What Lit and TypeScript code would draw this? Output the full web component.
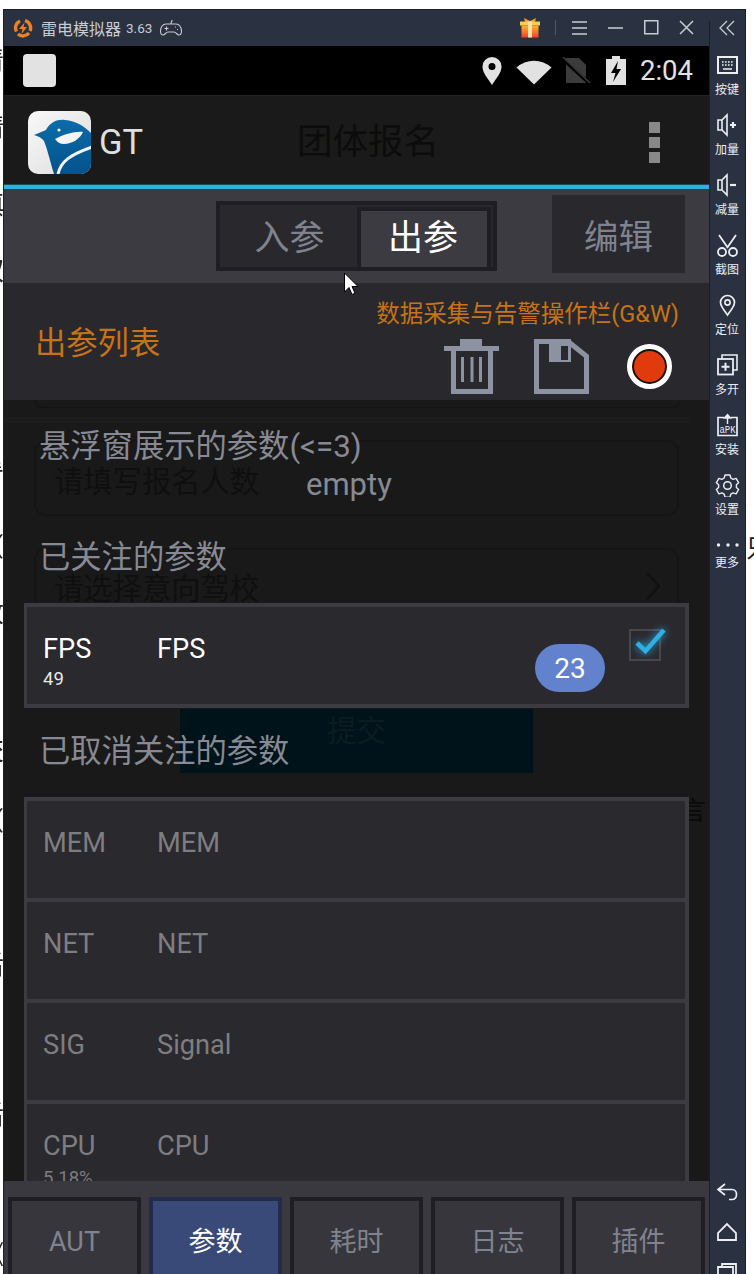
import { LitElement, html, css, svg } from 'lit';
import { customElement } from 'lit/decorators.js';

// fragments of the page behind the emulator window, cut off by the window edges
const LEFT_SCRAPS = [
  { y: 46, ch: '清' }, { y: 113, ch: '情' }, { y: 190, ch: '填' }, { y: 256, ch: '权' },
  { y: 325, ch: '；' }, { y: 460, ch: '看' }, { y: 532, ch: '（' }, { y: 598, ch: '收' },
  { y: 666, ch: '；' }, { y: 736, ch: '交' }, { y: 806, ch: '（' }, { y: 950, ch: '后' },
  { y: 1100, ch: '后' }, { y: 1240, ch: '《' },
];

const ROWS_OFF = [
  { code: 'MEM', name: 'MEM', value: '' },
  { code: 'NET', name: 'NET', value: '' },
  { code: 'SIG', name: 'Signal', value: '' },
  { code: 'CPU', name: 'CPU', value: '5.18%' },
];

const TABS = ['AUT', '参数', '耗时', '日志', '插件'];

const SIDE_ICONS = {
  keys: svg`<rect x="5" y="4" width="19" height="16" fill="none" stroke="currentColor" stroke-width="2"/>
    <path d="M9 9h1.6M12 9h1.6M15 9h1.6M18 9h1.6M9 12h1.6M12 12h1.6M15 12h1.6M18 12h1.6M10 16h9" stroke="currentColor" stroke-width="1.6" fill="none"/>`,
  volUp: svg`<path d="M5 7h4l5-5v20l-5-5H5zM9 7v10" fill="none" stroke="currentColor" stroke-width="1.6"/>
    <path d="M17 12h6M20 9v6" stroke="currentColor" stroke-width="2.2"/>`,
  volDown: svg`<path d="M5 7h4l5-5v20l-5-5H5zM9 7v10" fill="none" stroke="currentColor" stroke-width="1.6"/>
    <path d="M17 12h6" stroke="currentColor" stroke-width="2.2"/>`,
  cut: svg`<path d="M6 2l9 13M23 2l-9 13" fill="none" stroke="currentColor" stroke-width="1.8"/>
    <circle cx="9" cy="19" r="4" fill="none" stroke="currentColor" stroke-width="1.8"/>
    <circle cx="20" cy="19" r="4" fill="none" stroke="currentColor" stroke-width="1.8"/>`,
  pin: svg`<path d="M14.5 22C10 16 7.5 13 7.5 9.5a7 7 0 0 1 14 0c0 3.500-2.500 6.500-7 12.500z" fill="none" stroke="currentColor" stroke-width="1.7"/>
    <circle cx="14.500" cy="9.500" r="2.600" fill="none" stroke="currentColor" stroke-width="1.600"/>`,
  multi: svg`<path d="M9 6V2h15v15h-4" fill="none" stroke="currentColor" stroke-width="1.600"/>
    <rect x="5" y="6" width="15" height="15.500" fill="none" stroke="currentColor" stroke-width="1.800"/>
    <path d="M8.500 13.800h8M12.500 9.800v8" stroke="currentColor" stroke-width="2"/>`,
  apk: svg`<path d="M11 4.500H5v18h19v-18h-6" fill="none" stroke="currentColor" stroke-width="1.700"/>
    <path d="M14.500 11V3M11.500 5l3-3.500 3 3.500z" fill="currentColor" stroke="currentColor" stroke-width="1.400"/>
    <text x="14.500" y="20" text-anchor="middle" font-size="10" textLength="16" lengthAdjust="spacingAndGlyphs" font-family="Liberation Mono, monospace" fill="currentColor">aPK</text>`,
  gear: svg`<path d="M12 2.500h5l.8 3 2.300 1.300 3-.9 2.500 4.300-2.200 2.100v2.600l2.200 2.100-2.500 4.300-3-.9-2.300 1.300-.8 3h-5l-.8-3-2.300-1.300-3 .9-2.500-4.300 2.200-2.100v-2.600l-2.200-2.100 2.500-4.300 3 .9 2.300-1.300z" fill="none" stroke="currentColor" stroke-width="1.400" stroke-linejoin="round" transform="translate(0 -.5)"/>
    <circle cx="14.500" cy="12.500" r="3.800" fill="none" stroke="currentColor" stroke-width="1.500"/>`,
  dots: svg`<circle cx="5.500" cy="12" r="1.700" fill="currentColor"/><circle cx="15" cy="12" r="1.700" fill="currentColor"/><circle cx="24" cy="12" r="1.700" fill="currentColor"/>`,
};

const SIDE_ITEMS: { icon: keyof typeof SIDE_ICONS; label: string }[] = [
  { icon: 'keys', label: '按键' },
  { icon: 'volUp', label: '加量' },
  { icon: 'volDown', label: '减量' },
  { icon: 'cut', label: '截图' },
  { icon: 'pin', label: '定位' },
  { icon: 'multi', label: '多开' },
  { icon: 'apk', label: '安装' },
  { icon: 'gear', label: '设置' },
  { icon: 'dots', label: '更多' },
];

@customElement('app-root')
export class AppRoot extends LitElement {
  static styles = css`
    :host {
      display: block;
      position: relative;
      width: 754px;
      height: 1274px;
      overflow: hidden;
      background: #fff;
      font-family: Roboto, "Noto Sans CJK SC", sans-serif;
    }

    svg {
      display: block;
      flex: none;
    }

    .scraps-left {
      position: absolute;
      left: 0;
      top: 0;
      width: 3px;
      height: 1274px;
      overflow: hidden;
      opacity: 0.99;
    }

    .scrap {
      position: absolute;
      right: -1px;
      font-size: 26px;
      line-height: 30px;
      color: #222;
      white-space: nowrap;
    }

    .scrap-right {
      position: absolute;
      left: 746px;
      top: 534px;
      width: 8px;
      overflow: hidden;
      font-size: 25px;
      line-height: 30px;
      color: #222;
    }

    .window {
      position: absolute;
      left: 3px;
      top: 9px;
      width: 743px;
      height: 1265px;
      box-sizing: border-box;
      display: flex;
      border: 1px solid #1a1f29;
      border-bottom: 0;
      background: #2a3140;
    }

    .screen {
      width: 705px;
      display: flex;
      flex-direction: column;
      flex: none;
      height: 100%;
    }

    .titlebar {
      height: 35px;
      flex: none;
      display: flex;
      align-items: center;
      color: #c8ccd4;
      padding-left: 9px;
    }

    .app-name {
      font-size: 16px;
      margin-left: 8px;
    }

    .app-ver {
      font-size: 13.500px;
      margin-left: 5px;
    }

    .pad-icon {
      margin-left: 8px;
    }

    .win-actions {
      margin-left: auto;
      display: flex;
      align-items: center;
      padding-right: 15px;
    }

    .statusbar {
      height: 50px;
      flex: none;
      box-sizing: border-box;
      margin-top: 1px;
      background: #000;
      border-bottom: 1px solid #222;
      display: flex;
      align-items: center;
      color: #e2e2e2;
      padding-left: 19px;
    }

    .notif {
      width: 33px;
      height: 33px;
      border-radius: 4px;
      background: #e2e2e2;
    }

    .status-icons {
      margin-left: auto;
      display: flex;
      align-items: center;
      padding-right: 16px;
    }

    .clock {
      font-size: 27.500px;
      margin-left: 14px;
    }

    .appbar {
      height: 89px;
      flex: none;
      background: #1a1a1a;
      display: flex;
      align-items: center;
    }

    .logo {
      margin: 4px 0 0 24px;
    }

    .gt {
      font-size: 34.500px;
      color: #dfdfdf;
      margin-left: 8px;
      margin-top: 2px;
    }

    .ghost-title {
      font-size: 35.500px;
      color: #0c0c0c;
      margin-left: 154px;
      margin-top: -4px;
    }

    .overflow {
      margin-left: auto;
      margin-right: 49px;
      display: flex;
      flex-direction: column;
      gap: 4px;
      margin-top: 3px;
    }

    .overflow i {
      display: block;
      width: 11px;
      height: 11px;
      background: #888;
    }

    .accent {
      height: 4px;
      flex: none;
      background: #2db0e4;
      box-shadow: 0 -1px 0 #1c4a60;
    }

    .modebar {
      height: 94px;
      flex: none;
      background: #3c3b42;
      display: flex;
      align-items: flex-start;
    }

    .segment {
      margin: 12px 0 0 212px;
      width: 281px;
      height: 70px;
      box-sizing: border-box;
      border: 4px solid #1e1e24;
      background: #28282d;
      padding: 2px 3px 2px 0;
      display: grid;
      grid-template-columns: 137px 134px;
      color: #80838f;
      font-size: 35px;
      line-height: 64px;
      text-align: center;
    }

    .segment .first {
      padding-left: 2px;
    }

    .segment .on {
      box-sizing: border-box;
      border: 4px solid #1e1e24;
      background: #3c3b42;
      color: #fff;
      line-height: 56px;
      padding-right: 2px;
    }

    .edit {
      margin: 6px 0 0 55px;
      width: 133px;
      height: 78px;
      background: #28282d;
      color: #80838f;
      font-size: 34.500px;
      line-height: 84px;
      text-align: center;
    }

    .toolbar {
      height: 117px;
      flex: none;
      background: #29282d;
      display: flex;
      justify-content: space-between;
      color: #c77316;
    }

    .toolbar-title {
      font-size: 31.300px;
      line-height: 44px;
      margin: 39px 0 0 31px;
    }

    .tools {
      display: flex;
      flex-direction: column;
      align-items: flex-end;
      padding-right: 30px;
    }

    .tools-label {
      font-size: 23.500px;
      line-height: 30px;
      margin-top: 16px;
    }

    .tool-icons {
      display: flex;
      align-items: center;
      gap: 35px;
      margin: 10px 7px 0 0;
      color: #8d92a3;
    }

    .record {
      width: 45px;
      height: 45px;
      box-sizing: border-box;
      border-radius: 50%;
      border: 5px solid #fff;
      background: #e03a0d;
      box-shadow: inset 0 0 0 2px #111;
      margin-left: 3px;
    }

    .body {
      flex: 1;
      min-height: 0;
      position: relative;
      overflow: hidden;
      background: #191919;
    }

    /* the dimmed form of the app underneath the panel */
    .ghost {
      position: absolute;
      inset: 0;
      display: flex;
      flex-direction: column;
      color: #0f0f0f;
    }

    .ghost-tail {
      margin-left: 31px;
      width: 645px;
      height: 8px;
      box-sizing: border-box;
      border: 1px solid #131313;
      border-top: 0;
      border-radius: 0 0 10px 10px;
    }

    .ghost-band {
      margin-top: 9px;
      width: 685px;
      height: 6px;
      background: #1c1c1c;
    }

    .ghost-card {
      margin-left: 30px;
      width: 645px;
      box-sizing: border-box;
      border: 2px solid #151515;
      border-radius: 12px;
      display: flex;
      align-items: center;
      justify-content: space-between;
      padding: 0 17px 0 18px;
      font-size: 29.300px;
      flex: none;
    }

    .ghost-card.one {
      margin-top: 17px;
      height: 76px;
      padding-top: 2px;
    }

    .ghost-card.two {
      margin-top: 32px;
      height: 80px;
      padding-bottom: 4px;
    }

    .ghost-submit {
      margin: 81px 0 0 176px;
      width: 353px;
      height: 64px;
      background: #00131a;
      color: #0d1c20;
      font-size: 29.300px;
      line-height: 44px;
      text-align: center;
      flex: none;
    }

    .ghost-word {
      margin: 23px 0 0 676px;
      font-size: 26px;
      line-height: 30px;
      color: #0a0a0a;
    }

    .panel {
      position: relative;
      display: flex;
      flex-direction: column;
      color: #878a94;
    }

    .heading {
      font-size: 31.300px;
      line-height: 44px;
      margin-left: 35px;
    }

    .heading.first {
      margin-top: 25px;
    }

    .empty {
      font-size: 31px;
      line-height: 40px;
      margin: -4px 0 0 302px;
    }

    .heading.followed {
      margin-top: 31px;
    }

    .heading.unfollowed {
      margin-top: 22px;
    }

    .group {
      margin-left: 20px;
      width: 665px;
      box-sizing: border-box;
      border: solid #3c3b42;
      border-width: 4px 4px 4px 3px;
      background: #2a292e;
    }

    .group.on {
      margin-top: 23px;
    }

    .group.off {
      margin-top: 23px;
    }

    .row {
      height: 97px;
      box-sizing: border-box;
      display: flex;
      align-items: flex-start;
      padding: 27px 0 0 16px;
      font-size: 27.200px;
      line-height: 30px;
      color: #7e7e80;
      overflow: hidden;
    }

    .group.off .row + .row {
      height: 101px;
      border-top: 4px solid #3c3b42;
    }

    .group.off .value {
      margin-top: 5px;
    }

    .group.on .row {
      color: #fff;
      overflow: visible;
    }

    .cell-code {
      width: 114px;
      flex: none;
    }

    .value {
      font-size: 18.500px;
      line-height: 24px;
      margin-top: 3px;
    }

    .group.on .value {
      color: #e8e8e8;
    }

    .badge {
      margin: 10px 0 0 auto;
      width: 70px;
      height: 48px;
      border-radius: 24px;
      background: #6282cd;
      color: #fff;
      font-size: 28px;
      line-height: 50px;
      text-align: center;
    }

    .check {
      margin: -9px 20px 0 24px;
      overflow: visible;
    }

    .tabs {
      height: 93px;
      flex: none;
      box-sizing: border-box;
      background: #3a393f;
      padding: 16px 4px 0 4px;
      overflow: hidden;
      display: grid;
      grid-template-columns: repeat(5, 133px);
      gap: 8px;
    }

    .tab {
      height: 100px;
      box-sizing: border-box;
      border: 4px solid #1e1e24;
      background: #37363c;
      color: #80838f;
      font-size: 27px;
      line-height: 82px;
      text-align: center;
    }

    .tab.on {
      border-color: #232b4b;
      background: #3a4a78;
      color: #fff;
    }

    .side {
      position: relative;
      flex: 1;
      display: flex;
      flex-direction: column;
      color: #eceef2;
      overflow: hidden;
    }

    .side::before {
      content: '';
      position: absolute;
      left: 0;
      top: 11px;
      bottom: 0;
      width: 1px;
      background: #191e28;
    }

    .collapse {
      height: 36px;
      flex: none;
      display: flex;
      align-items: center;
      justify-content: center;
      color: #c8ccd4;
    }

    .side-items {
      padding-top: 7px;
      display: flex;
      flex-direction: column;
    }

    .side-item {
      height: 60px;
      display: flex;
      flex-direction: column;
      align-items: center;
    }

    .side-item span {
      margin-top: 5px;
      font-size: 12px;
      line-height: 16px;
    }

    .side-item.more span {
      margin-top: -2px;
    }

    .side-nav {
      margin-top: auto;
      margin-bottom: -8px;
      display: flex;
      flex-direction: column;
      align-items: center;
      gap: 20px;
    }

    .cursor {
      position: absolute;
      left: 343px;
      top: 272px;
    }
  `;

  private renderTitleIcons() {
    return html`<div class="win-actions">
      <svg width="20" height="20" viewBox="0 0 20 20" style="margin-right:15px">
        <defs><linearGradient id="gift" x1="0" y1="0" x2="0" y2="1"><stop offset="0" stop-color="#ffb52e"/><stop offset="1" stop-color="#f0402a"/></linearGradient></defs>
        <path d="M4 0l6 3 6-3-1 4H5z" fill="#f39a2b"/>
        <rect x="0" y="3.500" width="20" height="4" fill="#f7cf4d"/>
        <rect x="1.500" y="7.500" width="17" height="12" fill="url(#gift)"/>
        <rect x="8" y="3.500" width="4" height="16" fill="#ffe0a8"/>
      </svg>
      <svg width="2" height="15"><rect width="1" height="15" fill="#4a5870"/></svg>
      <svg width="15" height="14" viewBox="0 0 15 14" style="margin-left:15px" stroke="#c8ccd4" stroke-width="1.500"><path d="M0 1h15M0 7h15M0 13h15"/></svg>
      <svg width="15" height="14" viewBox="0 0 15 14" style="margin-left:21px" stroke="#c8ccd4" stroke-width="1.500"><path d="M0 7h15"/></svg>
      <svg width="15" height="15" viewBox="0 0 15 15" style="margin-left:21px" fill="none" stroke="#c8ccd4" stroke-width="1.500"><rect x=".750" y=".750" width="13" height="13"/></svg>
      <svg width="15" height="15" viewBox="0 0 15 15" style="margin-left:20px" fill="none" stroke="#c8ccd4" stroke-width="1.500"><path d="M1 1l13 13M14 1L1 14"/></svg>
    </div>`;
  }

  private renderStatusIcons() {
    return html`<div class="status-icons">
      <svg width="20" height="28" viewBox="0 0 20 28" fill="#e2e2e2"><path fill-rule="evenodd" d="M10 28C4 19 .500 15 .500 9.500a9.500 9.500 0 0 1 19 0C19.500 15 16 19 10 28zM10 6a3.500 3.500 0 1 0 0 7 3.500 3.500 0 0 0 0-7z"/></svg>
      <svg width="36" height="28" viewBox="0 0 36 28" fill="#e2e2e2" style="margin-left:14px"><path d="M.500 10.500A26 26 0 0 1 35.500 10.500L18 27.500z"/></svg>
      <svg width="28" height="28" viewBox="0 0 28 28" style="margin-left:11px"><path d="M3 1h13l7 7v18H3z" fill="#3b3b3b"/><path d="M0 2l27 25" stroke="#000" stroke-width="3.500"/><path d="M0 0l27 26" stroke="#3b3b3b" stroke-width="1.500"/></svg>
      <svg width="20" height="29" viewBox="0 0 20 29" style="margin-left:15px"><path d="M6 0h8v3h6v26H0V3h6z" fill="#e2e2e2"/><path d="M12 5L5 17h4.500L7 26l8-13h-4.500z" fill="#000"/></svg>
      <span class="clock">2:04</span>
    </div>`;
  }

  render() {
    return html`
      <div class="scraps-left">
        ${LEFT_SCRAPS.map((s) => html`<div class="scrap" style="top:${s.y}px">${s.ch}</div>`)}
      </div>
      <div class="scrap-right">只</div>

      <div class="window">
        <div class="screen">
          <div class="titlebar">
            <svg width="20" height="20" viewBox="0 0 20 20" fill="none">
              <path d="M3.500 13.500A7.500 7.500 0 0 1 7 3M12 2.700A7.500 7.500 0 0 1 17 13M16 15a7.500 7.500 0 0 1-11 1" stroke="#f08020" stroke-width="3.400"/>
              <path d="M11.500 4.500L6 11h3.500l-1 5L14 9h-3.500z" fill="#f08020"/>
            </svg>
            <span class="app-name">雷电模拟器</span>
            <span class="app-ver">3.63</span>
            <svg class="pad-icon" width="22" height="20" viewBox="0 0 22 20" fill="none" stroke="#c8ccd4" stroke-width="1.100">
              <path d="M6 6h10c3 0 5.500 3 5.500 7 0 2.500-1 4-2.500 4-2 0-3-3-5-3H8c-2 0-3 3-5 3-1.500 0-2.500-1.500-2.500-4 0-4 2.500-7 5.500-7zM11 6c0-2 1-2 1-4"/>
              <path d="M4.500 10.500h4M6.500 8.500v4M15 9h1M17 11.500h1"/>
            </svg>
            ${this.renderTitleIcons()}
          </div>

          <div class="statusbar">
            <div class="notif"></div>
            ${this.renderStatusIcons()}
          </div>

          <div class="appbar">
            <svg class="logo" width="63" height="63" viewBox="0 0 63 63">
              <defs>
                <linearGradient id="tile" x1="0" y1="0" x2="1" y2="1"><stop offset="0" stop-color="#f8f8f8"/><stop offset="1" stop-color="#dcdcdc"/></linearGradient>
                <linearGradient id="bird" x1="0" y1="0" x2="0" y2="1"><stop offset="0" stop-color="#0b6cab"/><stop offset="1" stop-color="#05528a"/></linearGradient>
                <clipPath id="tile-clip"><rect width="63" height="63" rx="10"/></clipPath>
              </defs>
              <g clip-path="url(#tile-clip)">
                <rect width="63" height="63" fill="url(#tile)"/>
                <path d="M6 24L18 19C22 11 30 8 37 9C48 10 56 15 63 22V63H26C22 50 20 40 16 30C14 27 10 25 6 24Z" fill="url(#bird)"/>
                <path d="M27 28C36 23 48 20 55 21C52 28 44 33 36 33C32 33 29 31 27 28Z" fill="#f4f4f4"/>
                <circle cx="31" cy="19" r="1.600" fill="#f4f4f4"/>
                <path d="M30 63C33 50 42 44 64 36" stroke="#f4f4f4" stroke-width="3" fill="none"/>
              </g>
            </svg>
            <span class="gt">GT</span>
            <span class="ghost-title">团体报名</span>
            <div class="overflow"><i></i><i></i><i></i></div>
          </div>

          <div class="accent"></div>

          <div class="modebar">
            <div class="segment"><div class="first">入参</div><div class="on">出参</div></div>
            <div class="edit">编辑</div>
          </div>

          <div class="toolbar">
            <div class="toolbar-title">出参列表</div>
            <div class="tools">
              <div class="tools-label">数据采集与告警操作栏(G&amp;W)</div>
              <div class="tool-icons">
                <svg width="55" height="55" viewBox="0 0 55 55" fill="currentColor">
                  <path d="M16 0h22v7h17v5H0V7h16z"/>
                  <path fill-rule="evenodd" d="M7 12h42v43H7zM12 12v38h32V12z"/>
                  <path d="M17 18h3v25h-3zM26.500 18h3v25h-3zM35 18h3v25h-3z"/>
                </svg>
                <svg width="55" height="55" viewBox="0 0 55 55" fill="currentColor">
                  <path fill-rule="evenodd" d="M0 0h35l20 16v39H0zM5 5v45h45V18.500L33 5v0z"/>
                  <path fill-rule="evenodd" d="M15 0h22v23H15zM27 7v14h7V7z"/>
                </svg>
                <div class="record"></div>
              </div>
            </div>
          </div>

          <div class="body">
            <div class="ghost">
              <div class="ghost-tail"></div>
              <div class="ghost-band"></div>
              <div class="ghost-card one">请填写报名人数</div>
              <div class="ghost-card two">
                <span>请选择意向驾校</span>
                <svg width="14" height="28" viewBox="0 0 14 28" fill="none" stroke="#111" stroke-width="2.500"><path d="M1 1l12 13L1 27"/></svg>
              </div>
              <div class="ghost-submit">提交</div>
              <div class="ghost-word">言</div>
            </div>

            <div class="panel">
              <div class="heading first">悬浮窗展示的参数(&lt;=3)</div>
              <div class="empty">empty</div>
              <div class="heading followed">已关注的参数</div>
              <div class="group on">
                <div class="row">
                  <div class="cell-code">FPS<div class="value">49</div></div>
                  <div>FPS</div>
                  <div class="badge">23</div>
                  <svg class="check" width="36" height="36" viewBox="0 0 36 36" fill="none">
                    <rect x="1" y="5" width="30" height="30" stroke="#47474c" stroke-width="2"/>
                    <path d="M8 18l8.500 8L35 5" stroke="#2db0e4" stroke-width="4.500" style="filter:drop-shadow(0 0 4px #2db0e4)"/>
                  </svg>
                </div>
              </div>
              <div class="heading unfollowed">已取消关注的参数</div>
              <div class="group off">
                ${ROWS_OFF.map(
                  (r) => html`<div class="row">
                    <div class="cell-code">${r.code}${r.value ? html`<div class="value">${r.value}</div>` : ''}</div>
                    <div>${r.name}</div>
                  </div>`,
                )}
              </div>
            </div>
          </div>

          <div class="tabs">
            ${TABS.map((t, i) => html`<div class="tab ${i === 1 ? 'on' : ''}">${t}</div>`)}
          </div>
        </div>

        <div class="side">
          <div class="collapse">
            <svg width="16" height="16" viewBox="0 0 16 16" fill="none" stroke="currentColor" stroke-width="1.300"><path d="M8 1L1 8l7 7M15 1L8 8l7 7"/></svg>
          </div>
          <div class="side-items">
            ${SIDE_ITEMS.map(
              (item) => html`<div class="side-item ${item.icon === 'dots' ? 'more' : ''}">
                <svg width="29" height="24" viewBox="0 0 29 24">${SIDE_ICONS[item.icon]}</svg>
                <span>${item.label}</span>
              </div>`,
            )}
          </div>
          <div class="side-nav">
            <svg width="22" height="20" viewBox="0 0 22 20" fill="none" stroke="currentColor" stroke-width="1.700"><path d="M9 2L2 7.500 9 13M2 7.500h14c6 0 6 10 0 10h-3"/></svg>
            <svg width="22" height="20" viewBox="0 0 22 20" fill="none" stroke="currentColor" stroke-width="1.800"><path d="M11 2L2 11v7h18v-7z"/></svg>
            <svg width="22" height="20" viewBox="0 0 22 20" fill="none" stroke="currentColor" stroke-width="1.800"><path d="M6 5V2h14v12h-3M2 5h15v14H2z"/></svg>
          </div>
        </div>
      </div>

      <svg class="cursor" width="16" height="24" viewBox="0 0 16 24">
        <path d="M1.500 1v19l4.500-4.500 3 7 3-1.300-3-6.700h6z" fill="#fff" stroke="#000" stroke-width="1"/>
      </svg>
    `;
  }
}
